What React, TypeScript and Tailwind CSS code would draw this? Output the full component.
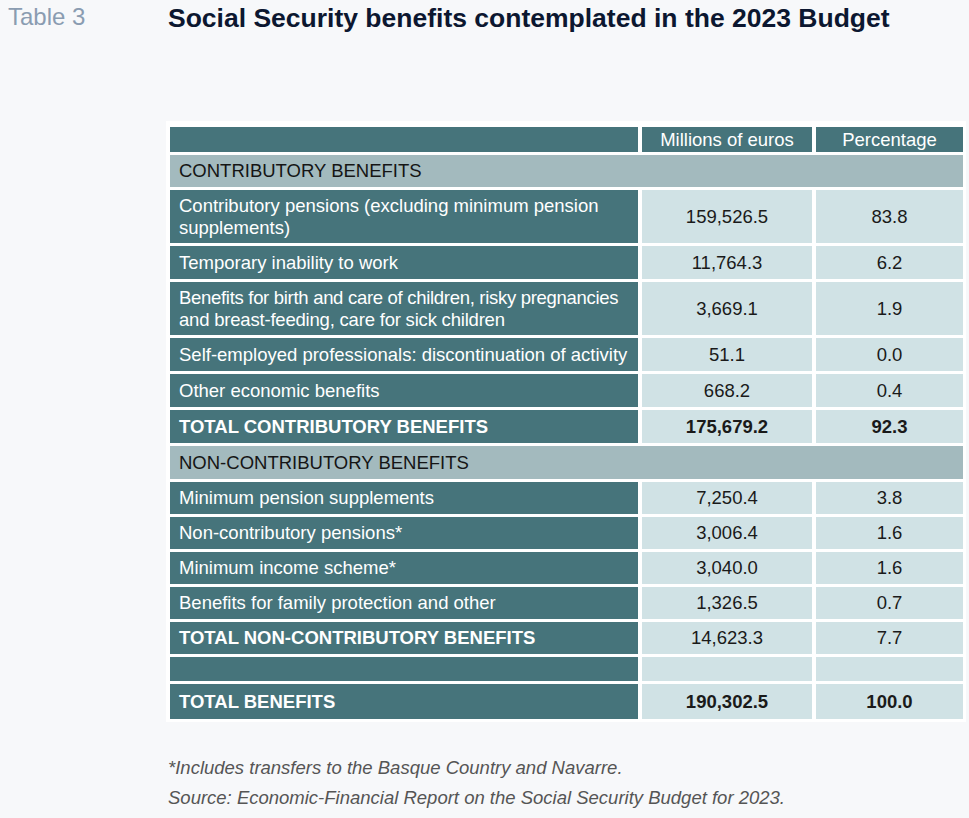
import React from "react";

type Row =
  | { kind: "section"; label: string; h: string }
  | { kind: "data"; label: React.ReactNode; a: string; b: string; bold?: boolean; boldNums?: boolean; h: string }
  | { kind: "empty" };

const rows: Row[] = [
  { kind: "section", label: "CONTRIBUTORY BENEFITS", h: "h-[32px]" },
  {
    kind: "data",
    label: (
      <>
        Contributory pensions (excluding minimum pension
        <br />
        supplements)
      </>
    ),
    a: "159,526.5",
    b: "83.8",
    h: "h-[53px]",
  },
  { kind: "data", label: "Temporary inability to work", a: "11,764.3", b: "6.2", h: "h-[33px]" },
  {
    kind: "data",
    label: (
      <>
        <span className="tracking-[-0.3px]">Benefits for birth and care of children, risky pregnancies</span>
        <br />
        <span className="tracking-[-0.2px]">and breast-feeding, care for sick children</span>
      </>
    ),
    a: "3,669.1",
    b: "1.9",
    h: "h-[53px]",
  },
  { kind: "data", label: "Self-employed professionals: discontinuation of activity", a: "51.1", b: "0.0", h: "h-[33px]" },
  { kind: "data", label: "Other economic benefits", a: "668.2", b: "0.4", h: "h-[33px]" },
  { kind: "data", label: "TOTAL CONTRIBUTORY BENEFITS", a: "175,679.2", b: "92.3", bold: true, boldNums: true, h: "h-[33px]" },
  { kind: "section", label: "NON-CONTRIBUTORY BENEFITS", h: "h-[33px]" },
  { kind: "data", label: "Minimum pension supplements", a: "7,250.4", b: "3.8", h: "h-[32px]" },
  { kind: "data", label: "Non-contributory pensions*", a: "3,006.4", b: "1.6", h: "h-[32px]" },
  { kind: "data", label: "Minimum income scheme*", a: "3,040.0", b: "1.6", h: "h-[32px]" },
  { kind: "data", label: "Benefits for family protection and other", a: "1,326.5", b: "0.7", h: "h-[32px]" },
  { kind: "data", label: "TOTAL NON-CONTRIBUTORY BENEFITS", a: "14,623.3", b: "7.7", bold: true, h: "h-[32px]" },
  { kind: "empty" },
  { kind: "data", label: "TOTAL BENEFITS", a: "190,302.5", b: "100.0", bold: true, boldNums: true, h: "h-[35px]" },
];

export default function App() {
  return (
    <div
      className="w-[969px] h-[818px] bg-[#f7f8fa] relative overflow-hidden"
      style={{ fontFamily: '"Liberation Sans", Arial, sans-serif' }}
    >
      <div className="flex items-start pt-[3px]">
        <div className="w-[168px] pl-[8px] text-[24px] leading-[30px] text-[#8a9cb1] -mt-[1px]">Table 3</div>
        <div className="text-[26.5px] leading-[30px] font-bold text-[#0c1730]">
          Social Security benefits contemplated in the 2023 Budget
        </div>
      </div>

      <div className="ml-[166px] mt-[88px] w-[800px] bg-white px-[4px] pt-[6px] pb-[3px]">
        <div className="grid grid-cols-[468px_170px_147px] gap-x-[4px] gap-y-[3px] text-[18.5px] leading-[22px]">
          <div className="bg-[#46747b] h-[25px]" />
          <div className="bg-[#46747b] h-[25px] flex items-center justify-center text-white">Millions of euros</div>
          <div className="bg-[#46747b] h-[25px] flex items-center justify-center text-white">Percentage</div>

          {rows.map((r, i) => {
            if (r.kind === "section") {
              return (
                <div key={i} className={`col-span-3 bg-[#a3babe] ${r.h} flex items-center pl-[9px] text-[#151515]`}>
                  {r.label}
                </div>
              );
            }
            if (r.kind === "empty") {
              return (
                <React.Fragment key={i}>
                  <div className="bg-[#46747b] h-[24px]" />
                  <div className="bg-[#d0e2e5] h-[24px]" />
                  <div className="bg-[#d0e2e5] h-[24px]" />
                </React.Fragment>
              );
            }
            const w = r.bold ? "font-bold" : "";
            const wn = r.boldNums ? "font-bold" : "";
            return (
              <React.Fragment key={i}>
                <div className={`bg-[#46747b] ${r.h} flex items-center pl-[9px] whitespace-nowrap text-white ${w}`}>
                  <div>{r.label}</div>
                </div>
                <div className={`bg-[#d0e2e5] ${r.h} flex items-center justify-center text-[#1a1a1a] ${wn}`}>{r.a}</div>
                <div className={`bg-[#d0e2e5] ${r.h} flex items-center justify-center text-[#1a1a1a] ${wn}`}>{r.b}</div>
              </React.Fragment>
            );
          })}
        </div>
      </div>

      <div className="ml-[168px] mt-[31px] italic text-[18.5px] leading-[30px] text-[#555]">
        <div>*Includes transfers to the Basque Country and Navarre.</div>
        <div>Source: Economic-Financial Report on the Social Security Budget for 2023.</div>
      </div>
    </div>
  );
}
